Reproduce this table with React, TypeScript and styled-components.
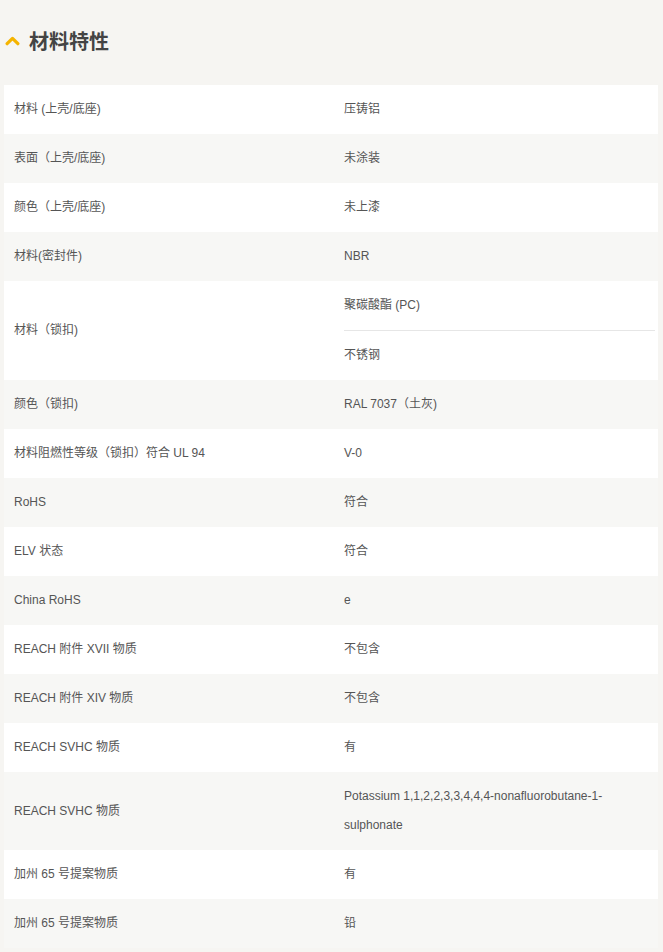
import React from "react";
import styled, { createGlobalStyle } from "styled-components";

type Row = {
  label: string;
  values: string[];
};

const rows: Row[] = [
  { label: "材料 (上壳/底座)", values: ["压铸铝"] },
  { label: "表面（上壳/底座)", values: ["未涂装"] },
  { label: "颜色（上壳/底座)", values: ["未上漆"] },
  { label: "材料(密封件)", values: ["NBR"] },
  { label: "材料（锁扣)", values: ["聚碳酸酯 (PC)", "不锈钢"] },
  { label: "颜色（锁扣)", values: ["RAL 7037（土灰)"] },
  { label: "材料阻燃性等级（锁扣）符合 UL 94", values: ["V-0"] },
  { label: "RoHS", values: ["符合"] },
  { label: "ELV 状态", values: ["符合"] },
  { label: "China RoHS", values: ["e"] },
  { label: "REACH 附件 XVII 物质", values: ["不包含"] },
  { label: "REACH 附件 XIV 物质", values: ["不包含"] },
  { label: "REACH SVHC 物质", values: ["有"] },
  {
    label: "REACH SVHC 物质",
    values: ["Potassium 1,1,2,2,3,3,4,4,4-nonafluorobutane-1-sulphonate"],
  },
  { label: "加州 65 号提案物质", values: ["有"] },
  { label: "加州 65 号提案物质", values: ["铅"] },
];

export default function App() {
  return (
    <>
      <GlobalStyle />
      <Page>
        <Header>
          <Chevron viewBox="0 0 14 10" aria-hidden>
            <path
              d="M2 8 L7 3 L12 8"
              fill="none"
              stroke="#f5b400"
              strokeWidth="3"
              strokeLinecap="round"
              strokeLinejoin="round"
            />
          </Chevron>
          <Title>材料特性</Title>
        </Header>
        <Table>
          {rows.map((row, i) => (
            <TableRow key={i} striped={i % 2 === 1}>
              <LabelCell>{row.label}</LabelCell>
              <ValueCell>
                {row.values.map((value, j) => (
                  <Value key={j} divided={j > 0}>
                    {value}
                  </Value>
                ))}
              </ValueCell>
            </TableRow>
          ))}
        </Table>
      </Page>
    </>
  );
}

const GlobalStyle = createGlobalStyle`
  body {
    margin: 0;
    background: #f6f5f2;
    font-family: "Liberation Sans", "Noto Sans CJK SC", sans-serif;
    color: #555;
  }
`;

const Page = styled.div`
  width: 663px;
  padding: 0 5px 0 4px;
  box-sizing: border-box;
`;

const Header = styled.div`
  height: 85px;
  box-sizing: border-box;
  padding: 0 0 5px 1px;
  display: flex;
  align-items: center;
  gap: 9px;
`;

const Chevron = styled.svg`
  width: 15px;
  height: 11px;
`;

const Title = styled.h2`
  margin: 0;
  font-size: 20px;
  font-weight: bold;
  color: #444;
  font-family: "Noto Sans CJK SC", sans-serif;
`;

const Table = styled.div`
  display: flex;
  flex-direction: column;
`;

type RowProps = { striped: boolean };

const TableRow = styled.div<RowProps>`
  display: grid;
  grid-template-columns: 330px 1fr;
  background: ${(p) => (p.striped ? "#f7f7f5" : "#ffffff")};
`;

const LabelCell = styled.div`
  padding: 10px 10px;
  font-size: 12px;
  line-height: 29px;
  display: flex;
  align-items: center;
`;

const ValueCell = styled.div`
  padding: 0 3px 0 10px;
  font-size: 12px;
  line-height: 29px;
  display: flex;
  flex-direction: column;
`;

type ValueProps = { divided: boolean };

const Value = styled.div<ValueProps>`
  padding: 10px 0;
  border-top: ${(p) => (p.divided ? "1px solid #e6e6e6" : "none")};
  word-break: break-word;
`;
